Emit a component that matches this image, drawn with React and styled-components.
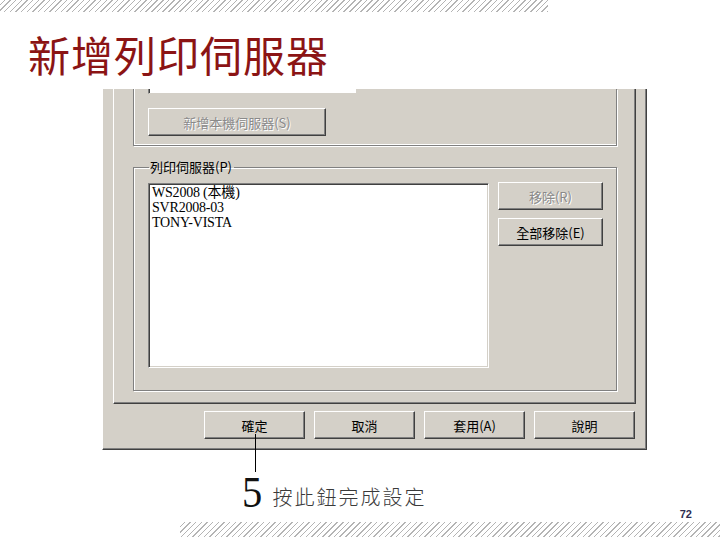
import styled, { createGlobalStyle } from "styled-components";

const GlobalStyle = createGlobalStyle`
  html, body {
    margin: 0;
    padding: 0;
    background: #fff;
  }
  body {
    font-family: "Noto Sans CJK TC", "Liberation Sans", sans-serif;
  }
`;

const Slide = styled.div`
  position: relative;
  width: 720px;
  height: 540px;
  overflow: hidden;
  display: flex;
  flex-direction: column;
  background: #fff;
  & > * {
    flex-shrink: 0;
  }
`;

const Hatch = styled.div`
  height: ${(p) => p.h}px;
  width: ${(p) => p.w}px;
  background: repeating-linear-gradient(
    135deg,
    transparent 0 3px,
    #b4b4b4 3px 4px
  );
`;

const Title = styled.h1`
  margin: 13px 0 0 28px;
  height: 64px;
  font-family: "Noto Sans CJK TC", sans-serif;
  font-weight: 400;
  font-size: 42px;
  line-height: 58px;
  letter-spacing: 1px;
  color: #8b1414;
`;

const Window = styled.div`
  margin-left: 102px;
  width: 545px;
  height: 361px;
  box-sizing: border-box;
  background: #d4d0c8;
  border-left: 1px solid #fff;
  border-right: 1px solid #404040;
  border-bottom: 1px solid #404040;
  box-shadow: inset -1px -1px #808080;
  display: flex;
  flex-direction: column;
  padding: 0 10px 10px 10px;
`;

const TabPage = styled.div`
  height: 315px;
  flex-shrink: 0;
  box-sizing: border-box;
  border-left: 1px solid #fff;
  border-right: 1px solid #404040;
  border-bottom: 1px solid #404040;
  box-shadow: inset -1px -1px #808080;
  padding: 0 18px 0 19px;
  display: flex;
  flex-direction: column;
`;

const UpperGroup = styled.div`
  box-sizing: border-box;
  flex-shrink: 0;
  width: 484px;
  height: 57px;
  border: 1px solid #808080;
  border-top: none;
  box-shadow: 1px 1px #fff, inset 1px -1px #fff;
  padding: 0 0 0 14px;
  display: flex;
  flex-direction: column;
  align-items: flex-start;
`;

const InputBox = styled.div`
  width: 207px;
  height: 4px;
  background: #fff;
  border-left: 1px solid #808080;
  border-bottom: 1px solid #d4d0c8;
  border-right: 1px solid #d4d0c8;
  box-shadow: inset 1px 0 #404040;
`;

const WinButton = styled.button`
  position: relative;
  box-sizing: border-box;
  width: ${(p) => p.w}px;
  height: ${(p) => p.h || 28}px;
  margin: 0;
  padding: 0;
  background: #d4d0c8;
  border: 1px solid;
  border-color: #fff #404040 #404040 #fff;
  box-shadow: inset -1px -1px #808080;
  font-family: "Noto Sans CJK TC", sans-serif;
  font-size: 13px;
  color: ${(p) => (p.disabled ? "#8a8a8a" : "#000")};
  text-shadow: ${(p) => (p.disabled ? "1px 1px #fff" : "none")};
  display: flex;
  align-items: center;
  justify-content: center;
`;

const AddLocalButton = styled(WinButton)`
  margin-top: 14px;
`;

const Group = styled.fieldset`
  margin: 14px 0 0 0;
  width: 484px;
  box-sizing: border-box;
  height: 231px;
  flex-shrink: 0;
  border: 1px solid #808080;
  box-shadow: 1px 1px #fff, inset 1px 1px #fff;
  padding: 9px 13px 0 14px;
  display: flex;
  gap: 9px;
`;

const Legend = styled.legend`
  margin-left: 1px;
  padding: 0 2px 0 1px;
  font-size: 13px;
  line-height: 14px;
  color: #000;
`;

const ListBox = styled.div`
  width: 341px;
  height: 185px;
  box-sizing: border-box;
  background: #fff;
  border: 1px solid;
  border-color: #808080 #fff #fff #808080;
  box-shadow: inset 1px 1px #404040, inset -1px -1px #d4d0c8;
  padding: 1px 3px;
`;

const ListItem = styled.div`
  font-family: "Liberation Serif", "Noto Sans CJK TC", serif;
  font-size: 14px;
  line-height: 15px;
  color: #000;
  letter-spacing: -0.2px;
`;

const SideButtons = styled.div`
  display: flex;
  flex-direction: column;
  gap: 8px;
  margin-top: -1px;
`;

const ButtonBar = styled.div`
  margin-top: 7px;
  display: flex;
  justify-content: flex-end;
  gap: 9px;
  padding-right: 1px;
`;

const Leader = styled.span`
  position: absolute;
  left: 50px;
  top: 22px;
  width: 1px;
  height: 38px;
  background: #000;
`;

const Callout = styled.div`
  margin: 26px 0 -6px 242px;
  display: flex;
  align-items: flex-end;
  gap: 10px;
  height: 34px;
`;

const StepNum = styled.span`
  font-family: "Liberation Serif", serif;
  font-size: 45px;
  line-height: 36px;
  color: #111;
  transform: scaleX(0.9);
  transform-origin: left bottom;
  margin-right: -2px;
`;

const StepText = styled.span`
  font-family: "Noto Sans CJK TC", sans-serif;
  font-size: 20px;
  line-height: 26px;
  letter-spacing: 2px;
  color: #3a3a3a;
  font-weight: 300;
`;

const Footer = styled.div`
  margin-top: auto;
  padding-bottom: 3px;
  display: flex;
  flex-direction: column;
  align-items: flex-end;
  gap: 2px;
`;

const PageNum = styled.div`
  margin-right: 28px;
  font-family: "Liberation Sans", sans-serif;
  font-weight: 700;
  font-size: 11px;
  line-height: 12px;
  color: #2e2e52;
`;

const servers = ["WS2008 (本機)", "SVR2008-03", "TONY-VISTA"];

export default function App() {
  return (
    <>
      <GlobalStyle />
      <Slide>
        <Hatch h={12} w={548} />
        <Title>新增列印伺服器</Title>
        <Window>
          <TabPage>
            <UpperGroup>
              <InputBox />
              <AddLocalButton w={178} h={28} disabled>
                新增本機伺服器(S)
              </AddLocalButton>
            </UpperGroup>
            <Group>
              <Legend>列印伺服器(P)</Legend>
              <ListBox>
                {servers.map((s) => (
                  <ListItem key={s}>{s}</ListItem>
                ))}
              </ListBox>
              <SideButtons>
                <WinButton w={105} disabled>
                  移除(R)
                </WinButton>
                <WinButton w={105}>全部移除(E)</WinButton>
              </SideButtons>
            </Group>
          </TabPage>
          <ButtonBar>
            <WinButton w={101}>
              確定
              <Leader />
            </WinButton>
            <WinButton w={101}>取消</WinButton>
            <WinButton w={101}>套用(A)</WinButton>
            <WinButton w={101}>說明</WinButton>
          </ButtonBar>
        </Window>
        <Callout>
          <StepNum>5</StepNum>
          <StepText>按此鈕完成設定</StepText>
        </Callout>
        <Footer>
          <PageNum>72</PageNum>
          <Hatch h={15} w={540} />
        </Footer>
      </Slide>
    </>
  );
}
